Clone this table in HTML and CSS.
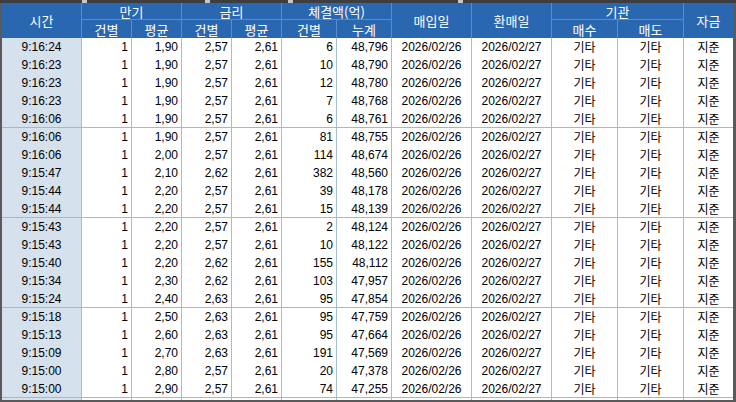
FILE: index.html
```html
<!DOCTYPE html>
<html lang="ko">
<head>
<meta charset="utf-8">
<link rel="stylesheet" href="styles.css">
</head>
<body>
<div class="frame">
  <div class="tabstrip">
    <span class="tab t1"></span><span class="tab t2"></span><span class="tab t3"></span><span class="tab t4"></span><span class="tab t5"></span>
  </div>
  <div class="panel">
    <div class="head">
      <div class="h c-time span2">시간</div>
      <div class="h g-mat">만기</div>
      <div class="h g-rate">금리</div>
      <div class="h g-amt">체결액(억)</div>
      <div class="h c-buy span2">매입일</div>
      <div class="h c-sell span2">환매일</div>
      <div class="h g-inst">기관</div>
      <div class="h c-fund span2">자금</div>
      <div class="h sub">건별</div>
      <div class="h sub">평균</div>
      <div class="h sub">건별</div>
      <div class="h sub">평균</div>
      <div class="h sub">건별</div>
      <div class="h sub">누계</div>
      <div class="h sub s-inst">매수</div>
      <div class="h sub s-inst2">매도</div>
    </div>
    <div class="body">
      <div class="row"><span class="t">9:16:24</span><span class="n">1</span><span class="n">1,90</span><span class="n">2,57</span><span class="n">2,61</span><span class="n">6</span><span class="n">48,796</span><span class="c">2026/02/26</span><span class="c">2026/02/27</span><span class="c k">기타</span><span class="c k">기타</span><span class="c k">지준</span></div>
      <div class="row"><span class="t">9:16:23</span><span class="n">1</span><span class="n">1,90</span><span class="n">2,57</span><span class="n">2,61</span><span class="n">10</span><span class="n">48,790</span><span class="c">2026/02/26</span><span class="c">2026/02/27</span><span class="c k">기타</span><span class="c k">기타</span><span class="c k">지준</span></div>
      <div class="row"><span class="t">9:16:23</span><span class="n">1</span><span class="n">1,90</span><span class="n">2,57</span><span class="n">2,61</span><span class="n">12</span><span class="n">48,780</span><span class="c">2026/02/26</span><span class="c">2026/02/27</span><span class="c k">기타</span><span class="c k">기타</span><span class="c k">지준</span></div>
      <div class="row"><span class="t">9:16:23</span><span class="n">1</span><span class="n">1,90</span><span class="n">2,57</span><span class="n">2,61</span><span class="n">7</span><span class="n">48,768</span><span class="c">2026/02/26</span><span class="c">2026/02/27</span><span class="c k">기타</span><span class="c k">기타</span><span class="c k">지준</span></div>
      <div class="row end"><span class="t">9:16:06</span><span class="n">1</span><span class="n">1,90</span><span class="n">2,57</span><span class="n">2,61</span><span class="n">6</span><span class="n">48,761</span><span class="c">2026/02/26</span><span class="c">2026/02/27</span><span class="c k">기타</span><span class="c k">기타</span><span class="c k">지준</span></div>
      <div class="row"><span class="t">9:16:06</span><span class="n">1</span><span class="n">1,90</span><span class="n">2,57</span><span class="n">2,61</span><span class="n">81</span><span class="n">48,755</span><span class="c">2026/02/26</span><span class="c">2026/02/27</span><span class="c k">기타</span><span class="c k">기타</span><span class="c k">지준</span></div>
      <div class="row"><span class="t">9:16:06</span><span class="n">1</span><span class="n">2,00</span><span class="n">2,57</span><span class="n">2,61</span><span class="n">114</span><span class="n">48,674</span><span class="c">2026/02/26</span><span class="c">2026/02/27</span><span class="c k">기타</span><span class="c k">기타</span><span class="c k">지준</span></div>
      <div class="row"><span class="t">9:15:47</span><span class="n">1</span><span class="n">2,10</span><span class="n">2,62</span><span class="n">2,61</span><span class="n">382</span><span class="n">48,560</span><span class="c">2026/02/26</span><span class="c">2026/02/27</span><span class="c k">기타</span><span class="c k">기타</span><span class="c k">지준</span></div>
      <div class="row"><span class="t">9:15:44</span><span class="n">1</span><span class="n">2,20</span><span class="n">2,57</span><span class="n">2,61</span><span class="n">39</span><span class="n">48,178</span><span class="c">2026/02/26</span><span class="c">2026/02/27</span><span class="c k">기타</span><span class="c k">기타</span><span class="c k">지준</span></div>
      <div class="row end"><span class="t">9:15:44</span><span class="n">1</span><span class="n">2,20</span><span class="n">2,57</span><span class="n">2,61</span><span class="n">15</span><span class="n">48,139</span><span class="c">2026/02/26</span><span class="c">2026/02/27</span><span class="c k">기타</span><span class="c k">기타</span><span class="c k">지준</span></div>
      <div class="row"><span class="t">9:15:43</span><span class="n">1</span><span class="n">2,20</span><span class="n">2,57</span><span class="n">2,61</span><span class="n">2</span><span class="n">48,124</span><span class="c">2026/02/26</span><span class="c">2026/02/27</span><span class="c k">기타</span><span class="c k">기타</span><span class="c k">지준</span></div>
      <div class="row"><span class="t">9:15:43</span><span class="n">1</span><span class="n">2,20</span><span class="n">2,57</span><span class="n">2,61</span><span class="n">10</span><span class="n">48,122</span><span class="c">2026/02/26</span><span class="c">2026/02/27</span><span class="c k">기타</span><span class="c k">기타</span><span class="c k">지준</span></div>
      <div class="row"><span class="t">9:15:40</span><span class="n">1</span><span class="n">2,20</span><span class="n">2,62</span><span class="n">2,61</span><span class="n">155</span><span class="n">48,112</span><span class="c">2026/02/26</span><span class="c">2026/02/27</span><span class="c k">기타</span><span class="c k">기타</span><span class="c k">지준</span></div>
      <div class="row"><span class="t">9:15:34</span><span class="n">1</span><span class="n">2,30</span><span class="n">2,62</span><span class="n">2,61</span><span class="n">103</span><span class="n">47,957</span><span class="c">2026/02/26</span><span class="c">2026/02/27</span><span class="c k">기타</span><span class="c k">기타</span><span class="c k">지준</span></div>
      <div class="row end"><span class="t">9:15:24</span><span class="n">1</span><span class="n">2,40</span><span class="n">2,63</span><span class="n">2,61</span><span class="n">95</span><span class="n">47,854</span><span class="c">2026/02/26</span><span class="c">2026/02/27</span><span class="c k">기타</span><span class="c k">기타</span><span class="c k">지준</span></div>
      <div class="row"><span class="t">9:15:18</span><span class="n">1</span><span class="n">2,50</span><span class="n">2,63</span><span class="n">2,61</span><span class="n">95</span><span class="n">47,759</span><span class="c">2026/02/26</span><span class="c">2026/02/27</span><span class="c k">기타</span><span class="c k">기타</span><span class="c k">지준</span></div>
      <div class="row"><span class="t">9:15:13</span><span class="n">1</span><span class="n">2,60</span><span class="n">2,63</span><span class="n">2,61</span><span class="n">95</span><span class="n">47,664</span><span class="c">2026/02/26</span><span class="c">2026/02/27</span><span class="c k">기타</span><span class="c k">기타</span><span class="c k">지준</span></div>
      <div class="row"><span class="t">9:15:09</span><span class="n">1</span><span class="n">2,70</span><span class="n">2,63</span><span class="n">2,61</span><span class="n">191</span><span class="n">47,569</span><span class="c">2026/02/26</span><span class="c">2026/02/27</span><span class="c k">기타</span><span class="c k">기타</span><span class="c k">지준</span></div>
      <div class="row"><span class="t">9:15:00</span><span class="n">1</span><span class="n">2,80</span><span class="n">2,57</span><span class="n">2,61</span><span class="n">20</span><span class="n">47,378</span><span class="c">2026/02/26</span><span class="c">2026/02/27</span><span class="c k">기타</span><span class="c k">기타</span><span class="c k">지준</span></div>
      <div class="row end"><span class="t">9:15:00</span><span class="n">1</span><span class="n">2,90</span><span class="n">2,57</span><span class="n">2,61</span><span class="n">74</span><span class="n">47,255</span><span class="c">2026/02/26</span><span class="c">2026/02/27</span><span class="c k">기타</span><span class="c k">기타</span><span class="c k">지준</span></div>
      <div class="row"><span class="t"></span><span class="n"></span><span class="n"></span><span class="n"></span><span class="n"></span><span class="n"></span><span class="n"></span><span class="c"></span><span class="c"></span><span class="c"></span><span class="c"></span><span class="c"></span></div>
    </div>
  </div>
</div>
</body>
</html>
```

FILE: styles.css
```css
* { box-sizing: border-box; margin: 0; padding: 0; }
html, body { width: 736px; height: 402px; overflow: hidden; background: #5a5a5a; }
body { font-family: "Liberation Sans", "Noto Sans CJK KR", sans-serif; font-size: 12px; color: #000; }

.frame {
  width: 736px;
  height: 402px;
  display: flex;
  flex-direction: column;
  overflow: hidden;
}

.tabstrip {
  height: 3px;
  flex: none;
  display: flex;
  background: #c8c8c8;
  gap: 5px;
}
.tab { display: block; height: 3px; background: #3e3e3e; }
.t1 { width: 82px; }
.t2 { width: 118px; }
.t3 { width: 78px; }
.t4 { width: 165px; }
.t5 { flex: 1; }

.panel {
  flex: 1;
  margin: 0 3px 2px 2px;
  background: #fff;
  overflow: hidden;
  border-left: 0;
}

.head {
  display: grid;
  grid-template-columns: 80px 50px 50px 50px 50px 55px 55px 80px 80px 66px 66px 49px;
  grid-template-rows: 17px 18px;
  background: #2a67b1;
  color: #fff;
  font-family: "Noto Sans CJK KR", "Liberation Sans", sans-serif;
  font-size: 13px;
}
.h {
  display: flex;
  align-items: center;
  justify-content: center;
  border-right: 1px solid #5a8ccb;
  line-height: 1;
}
.span2 { grid-row: 1 / 3; }
.c-time { grid-column: 1; }
.g-mat { grid-column: 2 / 4; border-bottom: 1px solid #5a8ccb; }
.g-rate { grid-column: 4 / 6; border-bottom: 1px solid #5a8ccb; }
.g-amt { grid-column: 6 / 8; border-bottom: 1px solid #5a8ccb; }
.c-buy { grid-column: 8; }
.c-sell { grid-column: 9; }
.g-inst { grid-column: 10 / 12; border-bottom: 1px solid #5a8ccb; }
.c-fund { grid-column: 12; border-right: 0; }
.sub { grid-row: 2; padding-top: 1px; }
.s-inst { grid-column: 10; }
.s-inst2 { grid-column: 11; }

.row {
  display: grid;
  grid-template-columns: 80px 50px 50px 50px 50px 55px 55px 80px 80px 66px 66px 49px;
  height: 18px;
}
.row.end { border-bottom: 1px solid #a2b8cd; }
.row > span {
  display: flex;
  align-items: center;
  border-right: 1px solid #a7bccf;
  line-height: 1;
  white-space: nowrap;
}
.row > span:last-child { border-right: 0; }
.t { justify-content: center; background: #d5e1ed; }
.n { justify-content: flex-end; padding-right: 3px; }
.c { justify-content: center; }
.k { font-family: "Noto Sans CJK KR", sans-serif; font-size: 12px; }
```
